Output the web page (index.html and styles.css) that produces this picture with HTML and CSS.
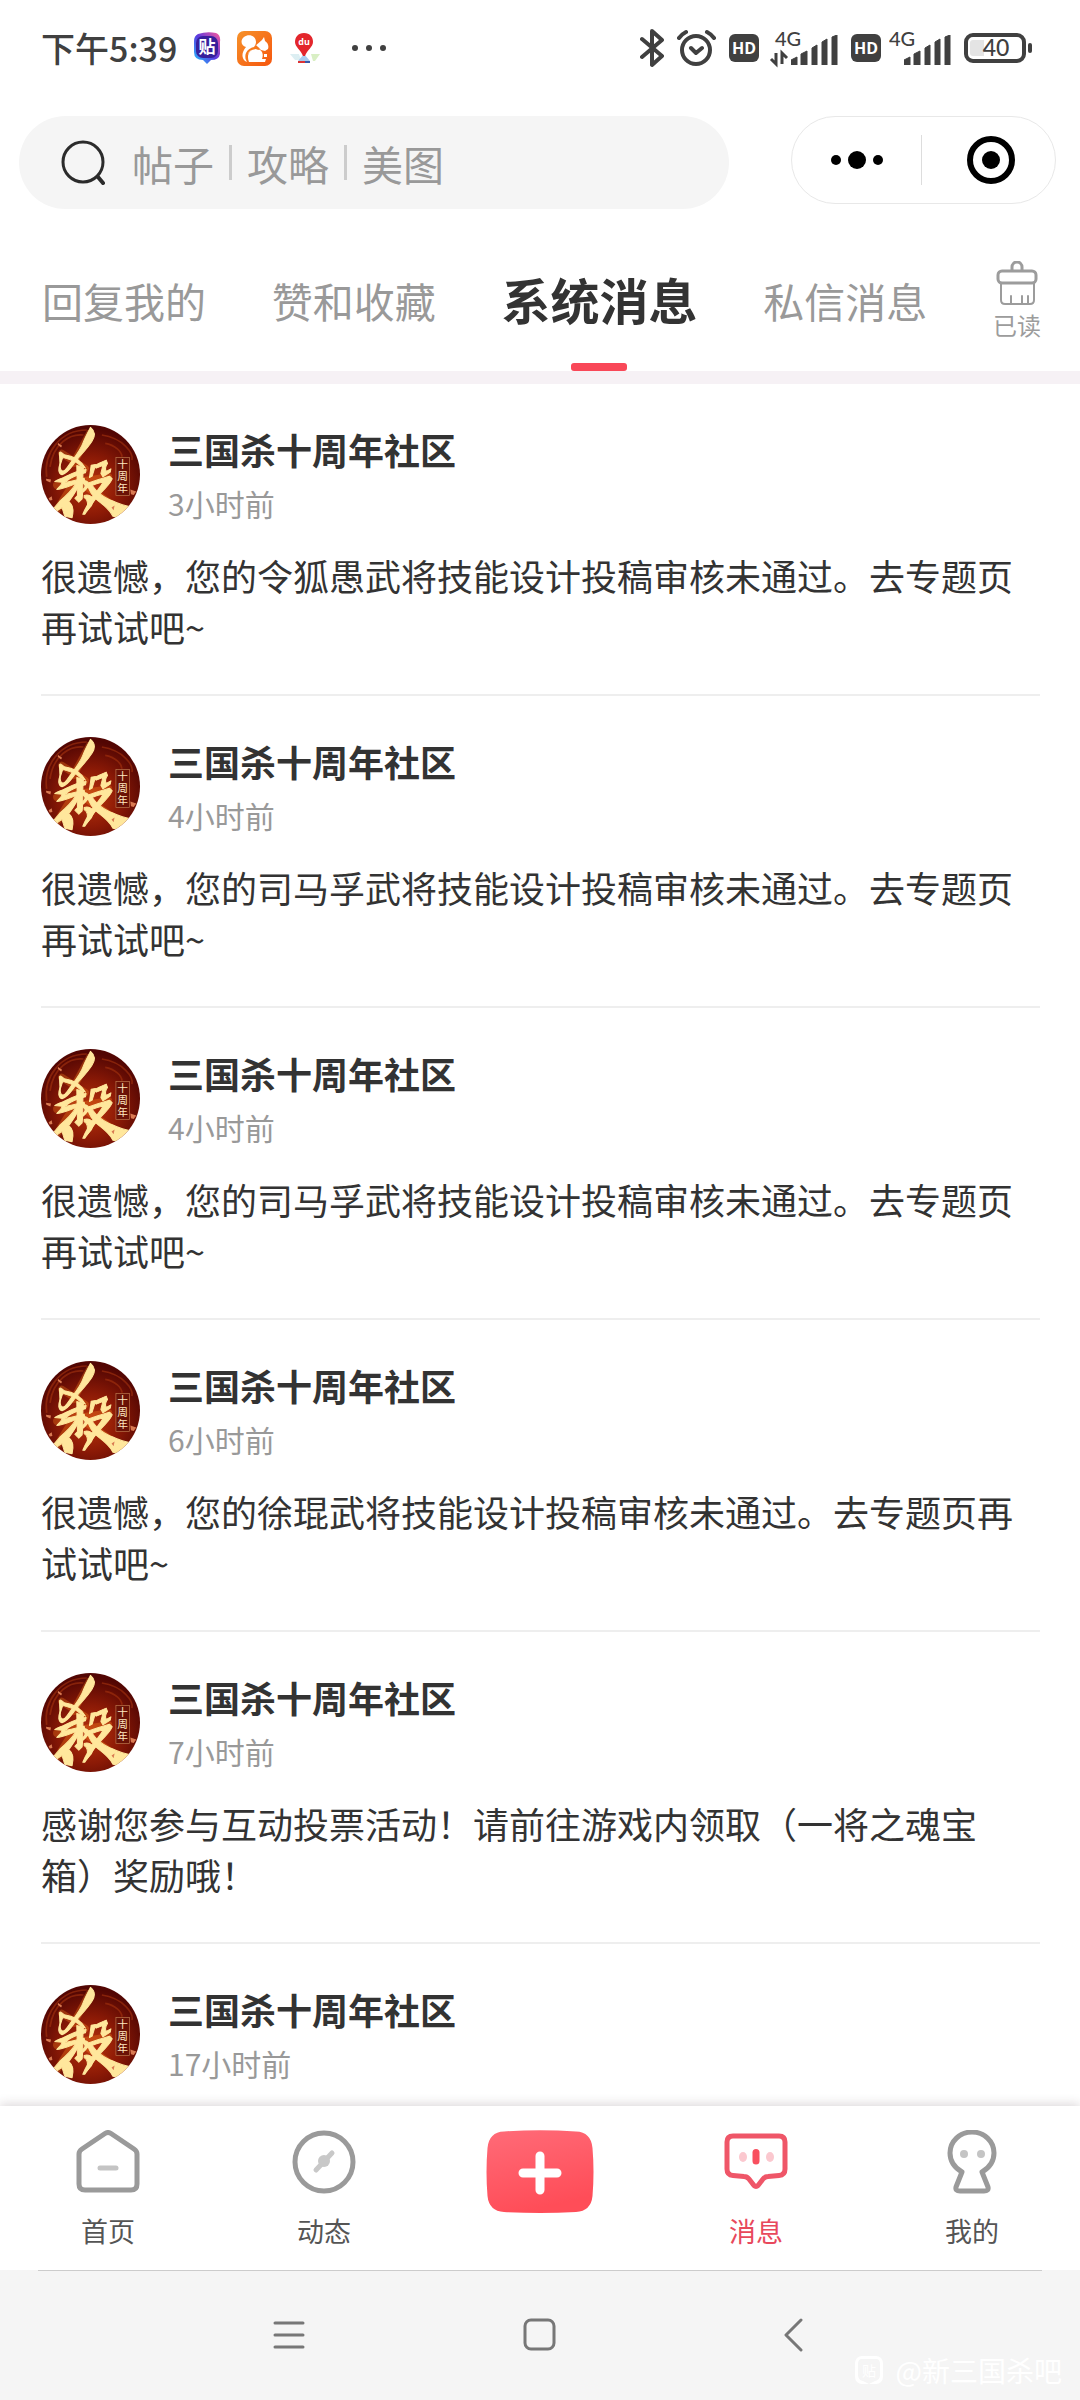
FILE: index.html
```html
<!DOCTYPE html>
<html lang="zh-CN">
<head>
<meta charset="utf-8">
<meta name="viewport" content="width=device-width, initial-scale=1">
<title>系统消息</title>
<link rel="stylesheet" href="styles.css">
</head>
<body>
<svg class="defs" aria-hidden="true">
  <defs>
    <radialGradient id="red" cx="50%" cy="62%" r="58%">
      <stop offset="0" stop-color="#b8330c"/>
      <stop offset=".5" stop-color="#8c1a06"/>
      <stop offset="1" stop-color="#520603"/>
    </radialGradient>
    <linearGradient id="gold" x1="0" y1="0" x2="0" y2="1">
      <stop offset="0" stop-color="#ffe9a6"/>
      <stop offset="1" stop-color="#ffe48e"/>
    </linearGradient>
    <clipPath id="disc"><circle cx="181" cy="193" r="148"/></clipPath>
    <symbol id="logo" viewBox="33 45 296 296">
      <g clip-path="url(#disc)">
        <rect x="33" y="45" width="296" height="296" fill="url(#red)"/>
        <path d="M60 170C70 100 120 70 160 75M50 200C40 130 90 60 170 60M215 75C280 85 310 130 305 150M225 100C255 105 275 125 275 140" fill="none" stroke="#a5330f" stroke-width="5" opacity=".6"/>
        <g fill="none" stroke="#f07a1c" stroke-width="22" stroke-linecap="round" opacity=".35">
          <path d="M178 70L130 160M95 130L165 175M80 225L235 200M148 190L80 300M175 235L280 305"/>
        </g>
        <g fill="#ffe79c" stroke="#ffe79c" stroke-width="3" stroke-linejoin="round">
          <path d="M181 52C193 62 197 76 186 93C170 118 152 134 138 152C124 170 116 186 96 194C84 190 84 176 90 160L91 175C94 185 102 186 110 174C134 140 150 122 158 100C164 84 172 70 181 52Z"/>
          <path d="M88 128C94 121 98 134 106 135C130 138 152 152 166 174L150 166C138 152 120 148 98 142L90 166Z"/>
          <path d="M74 214C80 208 94 206 104 200C124 190 148 180 168 178L166 188C140 194 120 204 104 216C118 216 132 210 162 204L164 214C130 220 104 236 80 238C90 228 96 222 96 216Z"/>
          <path d="M140 166L160 172C156 200 160 232 156 266L146 276L134 264L142 256Z"/>
          <path d="M138 216C130 240 108 254 90 272C80 284 74 292 62 302C76 312 80 300 96 292L104 318L126 322C134 290 124 280 116 274C126 260 140 244 146 222Z"/>
          <path d="M154 216C164 208 174 212 176 222C174 234 166 240 158 246L158 238C166 230 168 224 162 222Z"/>
          <path d="M183 165L196 163C194 174 190 184 186 198L178 202Z"/>
          <path d="M190 168C204 160 218 154 228 150L232 160C226 168 224 176 228 184L242 176L240 186L218 200L212 190L218 166L198 174Z"/>
          <path d="M164 222C190 212 218 204 238 198L246 206C238 224 220 240 206 254C194 268 180 288 164 312L158 312C166 292 180 268 194 250C204 238 214 226 218 216C200 218 180 228 166 234Z"/>
          <path d="M170 218L188 228C200 246 216 258 238 268C256 276 274 286 304 290L272 322L248 318C240 300 220 284 204 272C188 260 176 240 170 218Z"/>
          <path d="M162 256C172 252 182 256 192 266L184 286L170 302C174 284 174 268 162 262Z"/>
        </g>
        <g fill="#d97a52">
          <path d="M84 99l12 8-3 5-10-8zM48 206l15 2-2 9-12-5zM300 238l18 6-8 10-8-2zM56 264l9-6 2 11-8 2zM244 292l9-6-3 14z"/>
        </g>
        <rect x="257" y="142" width="41" height="114" fill="#6a1206" stroke="#bf7b50" stroke-width="2"/>
        <text class="seal" x="277" y="174">十</text>
        <text class="seal" x="277" y="210">周</text>
        <text class="seal" x="277" y="246">年</text>
      </g>
    </symbol>
    <symbol id="hd" viewBox="0 0 30 28">
      <rect width="30" height="28" rx="6" fill="#404040"/>
      <text class="hd-text" x="15" y="20">HD</text>
    </symbol>
    <symbol id="bars" viewBox="0 0 48 30">
      <path d="M0 30V25l6-3v8zM10 30V19l6-3v14zM21 30V13l5-3v20zM31 30V7l5-3v26zM41 30V2l5-2v30z" fill="#404040" stroke="#404040" stroke-width="1" stroke-linejoin="round"/>
    </symbol>
    <linearGradient id="coral" x1="0" y1="0" x2=".3" y2="1">
      <stop offset="0" stop-color="#ff6b78"/>
      <stop offset="1" stop-color="#ff4d58"/>
    </linearGradient>
    <linearGradient id="tieba" x1="0" y1="1" x2="1" y2="0">
      <stop offset="0" stop-color="#20c8ff"/>
      <stop offset=".5" stop-color="#5a3ae0"/>
      <stop offset="1" stop-color="#ff5a9a"/>
    </linearGradient>
    <linearGradient id="orange" x1="0" y1="0" x2="1" y2="1">
      <stop offset="0" stop-color="#f6922a"/>
      <stop offset="1" stop-color="#f6560e"/>
    </linearGradient>
  </defs>
</svg>

<div class="app">
  <header class="status">
    <div class="status-left">
      <time class="clock">下午5:39</time>
      <svg class="app-icon" width="28" height="32" viewBox="0 0 28 32" role="img" aria-label="贴吧">
        <path d="M5 2Q14-1 23 1Q28 3 27 10V22Q26 28 18 28L14 32L10 28Q1 28 1 20V9Q1 4 5 2Z" fill="url(#tieba)"/>
        <rect x="3" y="4" width="22" height="22" rx="7" fill="#38209c"/>
        <text class="tieba-text" x="14" y="21">贴</text>
      </svg>
      <svg class="app-icon" width="35" height="35" viewBox="0 0 35 35" role="img" aria-label="UC">
        <rect width="35" height="35" rx="7" fill="url(#orange)"/>
        <path d="M8 30C4 26 5 21 9 16C4 15 3 9 7 6C12 2 19 5 19 11C19 13 18 15 16 17L25 9L27 6L28 10C31 12 32 15 31 18L28 20L24 19L19 14L10 24C8 27 9 29 10 31Z" fill="#fff"/>
        <path d="M12 31C9 24 13 18 19 18C25 18 27 23 25 28H29L28 31Z" fill="#fff"/>
        <path d="M10 29C7 20 16 15 22 18" fill="none" stroke="#f67a1c" stroke-width="2"/>
        <rect x="27" y="23" width="3" height="3" fill="#fff"/>
      </svg>
      <svg class="app-icon" width="33" height="32" viewBox="0 0 33 32" role="img" aria-label="百度地图">
        <path d="M2 22H11L13 28H7Z" fill="#dceef2"/>
        <path d="M23 22H32L27 29H25Z" fill="#d9efc4"/>
        <path d="M16 22L22 29H10Z" fill="#a9cbee"/>
        <path d="M10 29h12v2H10z" fill="#3b5aa8"/><path d="M10 29h7v2h-7z" fill="#d33"/>
        <path d="M16 1C22 1 25 5 25 10C25 15 19 18 17 24H15C13 18 7 15 7 10C7 5 10 1 16 1Z" fill="#e3262c"/>
        <text class="du-text" x="16" y="13">du</text>
      </svg>
      <svg class="more" width="36" height="8" viewBox="0 0 36 8" aria-hidden="true">
        <g fill="#404040"><circle cx="4" cy="4" r="3"/><circle cx="18" cy="4" r="3"/><circle cx="32" cy="4" r="3"/></g>
      </svg>
    </div>
    <div class="status-right">
      <svg width="24" height="40" viewBox="0 0 24 40" role="img" aria-label="蓝牙">
        <path d="M2 11L22 28L12 37V3L22 12L2 29" fill="none" stroke="#404040" stroke-width="4" stroke-linecap="round" stroke-linejoin="round"/>
      </svg>
      <svg width="39" height="38" viewBox="0 0 39 38" role="img" aria-label="闹钟">
        <g fill="none" stroke="#404040" stroke-width="4" stroke-linecap="round" stroke-linejoin="round">
          <circle cx="19" cy="21" r="14"/>
          <path d="M14 19L19 24L25 19M2 9Q5 5 9 3M30 3Q34 5 37 9"/>
        </g>
      </svg>
      <div class="cell">
        <svg width="30" height="28"><use href="#hd"/></svg>
        <svg width="71" height="50" viewBox="0 -6 71 50" role="img" aria-label="4G 信号">
          <text class="net" x="8" y="17">4G</text>
          <path d="M9 24V35L4 30M15 35V24L20 29" fill="none" stroke="#404040" stroke-width="3"/>
          <use href="#bars" x="24" y="6" width="48" height="30"/>
        </svg>
      </div>
      <div class="cell">
        <svg width="30" height="28"><use href="#hd"/></svg>
        <svg width="62" height="50" viewBox="0 -6 62 50" role="img" aria-label="4G 信号">
          <text class="net" x="0" y="17">4G</text>
          <use href="#bars" x="15" y="6" width="48" height="30"/>
        </svg>
      </div>
      <svg width="68" height="30" viewBox="0 0 68 30" role="img" aria-label="电量 40">
        <rect x="2" y="2" width="58" height="26" rx="7" fill="none" stroke="#404040" stroke-width="4"/>
        <path d="M9 7H20V23H9Q6 23 6 20V10Q6 7 9 7Z" fill="#e4e4e4"/>
        <rect x="64" y="10" width="4" height="10" rx="2" fill="#404040"/>
        <text class="battery-text" x="32" y="23">40</text>
      </svg>
    </div>
  </header>

  <div class="top">
    <label class="search">
      <svg class="search-icon" width="44" height="45" viewBox="0 0 44 45" aria-hidden="true">
        <g fill="none" stroke="#2b2b2b" stroke-width="3" stroke-linecap="round">
          <circle cx="22" cy="22" r="20"/><path d="M37 37L42 43" stroke-width="4"/>
        </g>
      </svg>
      <input class="search-input" type="search" placeholder=" " aria-label="搜索">
      <span class="search-hint"><span>帖子</span><i></i><span>攻略</span><i></i><span>美图</span></span>
    </label>
    <div class="capsule">
      <button class="capsule-btn" type="button" aria-label="更多">
        <svg width="52" height="18" viewBox="0 0 52 18"><circle cx="5" cy="9" r="5"/><circle cx="26" cy="9" r="9"/><circle cx="47" cy="9" r="5"/></svg>
      </button>
      <button class="capsule-btn" type="button" aria-label="关闭">
        <svg width="50" height="50" viewBox="0 0 50 50"><circle cx="25" cy="25" r="21" fill="none" stroke="#000" stroke-width="6"/><circle cx="25" cy="25" r="9"/></svg>
      </button>
    </div>
  </div>

  <nav class="tabs">
    <a class="tab" href="#reply">回复我的</a>
    <a class="tab" href="#likes">赞和收藏</a>
    <a class="tab active" href="#system" aria-current="page">系统消息</a>
    <a class="tab" href="#private">私信消息</a>
    <button class="read" type="button">
      <svg width="42" height="45" viewBox="0 0 42 45" aria-hidden="true">
        <g fill="none" stroke="#9c9c9c" stroke-width="3" stroke-linecap="round">
          <path d="M16 9V6a5 5 0 0 1 10 0V9"/>
          <rect x="2" y="10" width="38" height="12" rx="4"/>
          <path d="M5 22V39Q5 43 9 43H34Q38 43 38 39V22M15 42V35M26 42V35M32 42V35" stroke-width="2"/>
        </g>
      </svg>
      <span>已读</span>
    </button>
  </nav>

  <main class="list">
    <article class="item">
      <div class="head">
        <svg class="avatar"><use href="#logo"/></svg>
        <div class="meta"><h2 class="name">三国杀十周年社区</h2><time class="ago">3小时前</time></div>
      </div>
      <p class="text">很遗憾，您的令狐愚武将技能设计投稿审核未通过。去专题页再试试吧~</p>
    </article>
    <article class="item">
      <div class="head">
        <svg class="avatar"><use href="#logo"/></svg>
        <div class="meta"><h2 class="name">三国杀十周年社区</h2><time class="ago">4小时前</time></div>
      </div>
      <p class="text">很遗憾，您的司马孚武将技能设计投稿审核未通过。去专题页再试试吧~</p>
    </article>
    <article class="item">
      <div class="head">
        <svg class="avatar"><use href="#logo"/></svg>
        <div class="meta"><h2 class="name">三国杀十周年社区</h2><time class="ago">4小时前</time></div>
      </div>
      <p class="text">很遗憾，您的司马孚武将技能设计投稿审核未通过。去专题页再试试吧~</p>
    </article>
    <article class="item">
      <div class="head">
        <svg class="avatar"><use href="#logo"/></svg>
        <div class="meta"><h2 class="name">三国杀十周年社区</h2><time class="ago">6小时前</time></div>
      </div>
      <p class="text">很遗憾，您的徐琨武将技能设计投稿审核未通过。去专题页再试试吧~</p>
    </article>
    <article class="item">
      <div class="head">
        <svg class="avatar"><use href="#logo"/></svg>
        <div class="meta"><h2 class="name">三国杀十周年社区</h2><time class="ago">7小时前</time></div>
      </div>
      <p class="text">感谢您参与互动投票活动！请前往游戏内领取（一将之魂宝箱）奖励哦！</p>
    </article>
    <article class="item">
      <div class="head">
        <svg class="avatar"><use href="#logo"/></svg>
        <div class="meta"><h2 class="name">三国杀十周年社区</h2><time class="ago">17小时前</time></div>
      </div>
    </article>
  </main>

  <nav class="bottom">
    <a class="entry" href="#home">
      <svg width="64" height="64" viewBox="0 0 64 64" aria-hidden="true">
        <path d="M29 3.500Q32 1.500 35 3.500L58 19Q61 21 61 24V54Q61 60 55 60H9Q3 60 3 54V24Q3 21 6 19Z" fill="none" stroke="#9a9a9a" stroke-width="5" stroke-linejoin="round"/>
        <path d="M24 38H40" stroke="#c4c4c4" stroke-width="5" stroke-linecap="round"/>
      </svg>
      <span>首页</span>
    </a>
    <a class="entry" href="#feed">
      <svg width="64" height="64" viewBox="0 0 64 64" aria-hidden="true">
        <circle cx="32" cy="32" r="29" fill="none" stroke="#9a9a9a" stroke-width="5"/>
        <path d="M24 40L40 23" stroke="#c8c8c8" stroke-width="5" stroke-linecap="round"/><circle cx="32" cy="31" r="6" fill="#c8c8c8"/>
      </svg>
      <span>动态</span>
    </a>
    <button class="post" type="button" aria-label="发布">
      <svg width="108" height="84" viewBox="0 0 108 84">
        <path d="M18 1.500Q54-1 90 1.500Q105 2 106.500 18Q108.500 42 106.500 66Q105 81 90 82Q54 84 18 82Q3 81 1.500 66Q-.5 42 1.500 18Q3 2 18 1.500Z" fill="url(#coral)"/>
        <path d="M54 26V60M37 43H71" stroke="#fff" stroke-width="9" stroke-linecap="round"/>
      </svg>
    </button>
    <a class="entry current" href="#messages" aria-current="page">
      <svg width="64" height="64" viewBox="0 0 64 64" aria-hidden="true">
        <path d="M9 6H55Q61 6 61 12V39Q61 45 55 45.500L44 46.500Q41 46.500 39 49L34 55.500Q32 57.500 30 55.500L25 49Q23 46.500 20 46.500L9 45.500Q3 45 3 39V12Q3 6 9 6Z" fill="none" stroke="#ef5668" stroke-width="5" stroke-linejoin="round"/>
        <ellipse cx="19" cy="27" rx="4" ry="5" fill="#fbc8cf"/><ellipse cx="46" cy="27" rx="4" ry="5" fill="#fbc8cf"/>
        <path d="M32 22.500V31" stroke="#f8505f" stroke-width="7" stroke-linecap="round"/>
      </svg>
      <span>消息</span>
    </a>
    <a class="entry" href="#me">
      <svg width="64" height="64" viewBox="0 0 64 64" aria-hidden="true">
        <path d="M22 42Q10 35 10 23A22 21 0 0 1 54 23Q54 35 42 42L48 57Q49 61 44 61H20Q15 61 16 57Z" fill="none" stroke="#9a9a9a" stroke-width="5" stroke-linejoin="round"/>
        <circle cx="24" cy="24" r="4" fill="#c4c4c4"/><circle cx="41" cy="24" r="4" fill="#c4c4c4"/>
      </svg>
      <span>我的</span>
    </a>
  </nav>

  <footer class="system">
    <div class="keys">
      <button type="button" aria-label="菜单"><svg width="34" height="34" viewBox="0 0 34 34"><path d="M4 5H32M4 17H32M4 29H32"/></svg></button>
      <button type="button" aria-label="主屏幕"><svg width="34" height="34" viewBox="0 0 34 34"><rect x="2" y="2" width="29" height="29" rx="6"/></svg></button>
      <button type="button" aria-label="返回"><svg width="34" height="34" viewBox="0 0 34 34"><path d="M26 2L11 17L26 32"/></svg></button>
    </div>
    <div class="watermark">
      <svg width="30" height="31" viewBox="0 0 30 31" aria-hidden="true">
        <rect x="1" y="1" width="28" height="28" rx="7" fill="#fff"/>
        <path d="M8 4H22Q26 4 26 9V20Q26 25 21 26L15 29L9 26Q4 25 4 20V9Q4 4 8 4Z" fill="#f5f5f5"/>
        <text class="mark-text" x="15" y="21">贴</text>
      </svg>
      <span>@新三国杀吧</span>
    </div>
  </footer>
</div>
</body>
</html>
```
FILE: styles.css
```css
* {
  box-sizing: border-box;
}

body {
  margin: 0;
  background: #fff;
  color: #333;
  font-family: "Noto Sans CJK SC", "Noto Sans", sans-serif;
}

a {
  color: inherit;
  text-decoration: none;
}

button {
  padding: 0;
  border: 0;
  background: none;
  color: inherit;
  font: inherit;
}

svg {
  display: block;
  flex: none;
}

.defs {
  position: absolute;
  width: 0;
  height: 0;
}

.app {
  display: flex;
  flex-direction: column;
  height: 100vh;
}

/* Status bar */
.status {
  display: flex;
  justify-content: space-between;
  align-items: center;
  height: 96px;
  padding: 0 48px 0 41px;
  color: #404040;
}

.status-left,
.status-right,
.cell {
  display: flex;
  align-items: center;
}

.status-left {
  gap: 16px;
}

.status-right {
  gap: 13px;
}

.cell {
  gap: 8px;
}

.clock {
  font-size: 34px;
  font-weight: 500;
  line-height: 48px;
}

.more {
  margin-left: 14px;
}

.hd-text,
.du-text,
.tieba-text,
.battery-text,
.mark-text,
.seal {
  text-anchor: middle;
}

.hd-text {
  fill: #fff;
  font: bold 16px "Open Sans", sans-serif;
}

.du-text {
  fill: #fff;
  font: bold 9px "Open Sans", sans-serif;
}

.tieba-text {
  fill: #fff;
  font-size: 17px;
  font-weight: bold;
}

.net {
  fill: #404040;
  font: 500 20px Lato, sans-serif;
}

.battery-text {
  fill: #404040;
  font: 500 23px Lato, sans-serif;
}

.seal {
  fill: #ffe9c0;
  font-family: "Liberation Serif", "Noto Sans CJK SC", serif;
  font-size: 32px;
}

/* Search and capsule */
.top {
  display: flex;
  align-items: flex-start;
  gap: 62px;
  padding: 20px 24px 0 19px;
}

.search {
  display: grid;
  grid-template-columns: auto 1fr;
  align-items: center;
  column-gap: 27px;
  flex: 1;
  height: 93px;
  padding: 0 42px;
  border-radius: 47px;
  background: #f5f5f5;
}

.search-input {
  grid-area: 1 / 2;
  width: 100%;
  padding: 0;
  border: 0;
  outline: 0;
  background: none;
  font: 41px/60px "Noto Sans CJK SC", sans-serif;
}

.search-hint {
  grid-area: 1 / 2;
  display: flex;
  align-items: center;
  gap: 15px;
  color: #999;
  font-size: 41px;
  line-height: 60px;
  pointer-events: none;
}

.search-hint i {
  width: 3px;
  height: 35px;
  background: #ccc;
}

.search-input:not(:placeholder-shown) + .search-hint {
  visibility: hidden;
}

.capsule {
  display: flex;
  width: 265px;
  height: 88px;
  border: 1px solid #e8e8e8;
  border-radius: 44px;
}

.capsule-btn {
  display: flex;
  flex: 1;
  align-items: center;
  justify-content: center;
  margin: 18px 0;
}

.capsule-btn + .capsule-btn {
  padding-left: 4px;
  border-left: 1px solid #ddd;
}

/* Message categories */
.tabs {
  display: flex;
  justify-content: space-between;
  height: 175px;
  padding: 20px 39px 0 42px;
  border-bottom: 13px solid #f6f1f5;
}

.tab {
  position: relative;
  display: flex;
  align-items: center;
  color: #999;
  font-size: 41px;
}

.tab.active {
  padding-bottom: 4px;
  color: #333;
  font-size: 49px;
  font-weight: bold;
}

.tab.active::after {
  content: "";
  position: absolute;
  bottom: 0;
  left: 50%;
  width: 56px;
  height: 8px;
  margin-left: -28px;
  border-radius: 3px;
  background: #f94858;
}

.read {
  display: flex;
  flex-direction: column;
  align-items: center;
  justify-content: center;
  gap: 1px;
  padding-top: 3px;
  color: #9c9c9c;
  font-size: 24px;
  line-height: 36px;
}

/* Message list */
.list {
  flex: 1;
  min-height: 0;
  padding: 0 40px 0 41px;
  overflow: auto;
  scrollbar-width: none;
}

.item {
  padding: 41px 0 40px;
  border-bottom: 2px solid #eee;
}

.head {
  display: flex;
  gap: 28px;
}

.avatar {
  width: 99px;
  height: 99px;
}

.meta {
  display: flex;
  flex-direction: column;
  gap: 12px;
}

.name {
  margin: 0;
  font-size: 36px;
  font-weight: 700;
  line-height: 48px;
}

.ago {
  color: #999;
  font-size: 30px;
  line-height: 36px;
}

.text {
  margin: 26px 0 0;
  padding-bottom: 2px;
  font-size: 36px;
  line-height: 51px;
  text-spacing-trim: space-all;
}

/* App navigation */
.bottom {
  position: relative;
  display: grid;
  grid-template-columns: repeat(5, 1fr);
  justify-items: center;
  align-items: start;
  height: 164px;
  padding-top: 24px;
  background: #fff;
  box-shadow: 0 -2px 10px rgba(60, 40, 50, .18);
}

.entry {
  display: flex;
  flex-direction: column;
  align-items: center;
  gap: 17px;
  color: #555;
  font-size: 27px;
  line-height: 40px;
}

.entry.current {
  color: #e8485c;
}

/* System keys */
.system {
  position: relative;
  height: 130px;
  background: #f5f5f5;
}

.system::before {
  content: "";
  display: block;
  height: 1px;
  margin: 0 38px;
  background: #ccc;
}

.keys {
  display: grid;
  grid-template-columns: repeat(3, 1fr);
  justify-items: center;
  align-items: center;
  width: 70%;
  height: 128px;
  margin: 0 auto;
}

.keys svg {
  fill: none;
  stroke: #777;
  stroke-width: 3;
  stroke-linecap: round;
  stroke-linejoin: round;
}

.watermark {
  position: absolute;
  right: 18px;
  bottom: 10px;
  display: flex;
  align-items: center;
  gap: 12px;
  color: #fff;
  font-size: 28px;
  line-height: 40px;
}

.mark-text {
  fill: #fff;
  font-size: 14px;
}
```
